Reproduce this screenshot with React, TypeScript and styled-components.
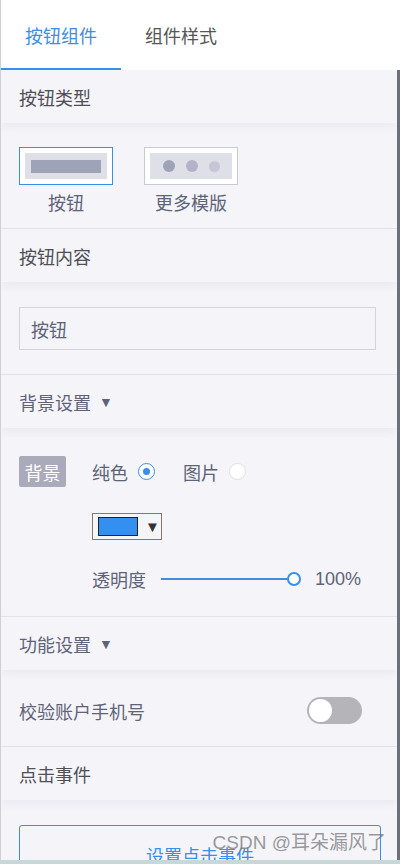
import React, { useState } from 'react'
import styled, { createGlobalStyle } from 'styled-components'

const GlobalStyle = createGlobalStyle`
  body {
    margin: 0;
    background: #f4f4f9;
    font-family: "Liberation Sans", "Noto Sans CJK SC", sans-serif;
  }
`

const BLUE = '#3a8ee6'
const LABEL = '#5f6378'

export default function App() {
    const [tab, setTab] = useState(0)
    const [template, setTemplate] = useState(0)
    const [fill, setFill] = useState<'color' | 'image'>('color')
    const [checkPhone, setCheckPhone] = useState(false)

    return (
        <>
            <GlobalStyle />
            <Frame>
                <Tabs>
                    {['按钮组件', '组件样式'].map((t, i) => (
                        <Tab key={t} $active={tab === i} onClick={() => setTab(i)}>{t}</Tab>
                    ))}
                </Tabs>
                <Body>
                    <Content>
                        <SectionHeader>按钮类型</SectionHeader>
                        <Section>
                            <Templates>
                                <TemplateItem onClick={() => setTemplate(0)}>
                                    <TemplateBox $selected={template === 0}>
                                        <Preview><Bar /></Preview>
                                    </TemplateBox>
                                    <Label>按钮</Label>
                                </TemplateItem>
                                <TemplateItem onClick={() => setTemplate(1)}>
                                    <TemplateBox $selected={template === 1}>
                                        <Preview>
                                            <Dot $tone="#9ea3b8" />
                                            <Dot $tone="#b1b4c8" />
                                            <Dot $tone="#c5c7d7" $small />
                                        </Preview>
                                    </TemplateBox>
                                    <Label>更多模版</Label>
                                </TemplateItem>
                            </Templates>
                        </Section>

                        <SectionHeader>按钮内容</SectionHeader>
                        <Section $pad="25px 21px 24px 18px">
                            <TextInput defaultValue="按钮" />
                        </Section>

                        <SectionHeader $tone={LABEL}>背景设置 <Caret>▼</Caret></SectionHeader>
                        <Section $pad="28px 18px 26px 18px">
                            <FillRow>
                                <Tag>背景</Tag>
                                <Option onClick={() => setFill('color')}>
                                    纯色 <Radio $checked={fill === 'color'} />
                                </Option>
                                <Option onClick={() => setFill('image')}>
                                    图片 <Radio $checked={fill === 'image'} />
                                </Option>
                            </FillRow>
                            <ColorPicker>
                                <Swatch />
                                <PickerArrow>▼</PickerArrow>
                            </ColorPicker>
                            <SliderRow>
                                <span>透明度</span>
                                <Track>
                                    <Knob />
                                </Track>
                                <Percent>100%</Percent>
                            </SliderRow>
                        </Section>

                        <SectionHeader $tone={LABEL}>功能设置 <Caret>▼</Caret></SectionHeader>
                        <Section $pad="27px 18px 22px 18px">
                            <ToggleRow>
                                <span>校验账户手机号</span>
                                <Toggle $on={checkPhone} onClick={() => setCheckPhone(!checkPhone)}>
                                    <Thumb $on={checkPhone} />
                                </Toggle>
                            </ToggleRow>
                        </Section>

                        <SectionHeader>点击事件</SectionHeader>
                        <Section $pad="25px 16px 0 18px" $last>
                            <EventButton>设置点击事件</EventButton>
                        </Section>
                        <Watermark>CSDN @耳朵漏风了</Watermark>
                    </Content>
                    <ScrollBar />
                </Body>
                <BottomStrip />
            </Frame>
        </>
    )
}

const Frame = styled.div`
  width: 400px;
  height: 864px;
  display: flex;
  flex-direction: column;
  overflow: hidden;
`

const Tabs = styled.div`
  height: 70px;
  flex-shrink: 0;
  display: flex;
  background: #fff;
  border-left: 1px solid #cfcfd6;
`

const Tab = styled.div<{ $active?: boolean }>`
  width: 120px;
  box-sizing: border-box;
  padding-top: 2px;
  display: flex;
  align-items: center;
  justify-content: center;
  font-size: 18px;
  color: ${p => (p.$active ? BLUE : '#555')};
  border-bottom: 2px solid ${p => (p.$active ? BLUE : 'transparent')};
  cursor: pointer;
`

const Body = styled.div`
  flex: 1;
  display: flex;
  min-height: 0;
`

const Content = styled.div`
  flex: 1;
  position: relative;
  background: #f4f4f9;
  border-left: 1px solid #cfcfd6;
  overflow: hidden;
`

const ScrollBar = styled.div`
  width: 3px;
  background: #6b7079;
`

const BottomStrip = styled.div`
  height: 4px;
  flex-shrink: 0;
  background: #c8d7d7;
`

const SectionHeader = styled.div<{ $tone?: string }>`
  position: relative;
  z-index: 1;
  height: 53px;
  display: flex;
  align-items: center;
  padding-left: 18px;
  font-size: 18px;
  color: ${p => p.$tone || '#4f4f55'};
  background: #f4f4f9;
  box-shadow: 0 4px 8px rgba(60, 60, 90, 0.06);
`

const Caret = styled.span`
  font-size: 14px;
  margin-left: 8px;
  margin-top: 1px;
  color: #5f6378;
`

const Section = styled.div<{ $pad?: string; $last?: boolean }>`
  padding: ${p => p.$pad || '24px 18px 11px 18px'};
  border-bottom: ${p => (p.$last ? 'none' : '1px solid #e3e3ea')};
`

const Templates = styled.div`
  display: flex;
  gap: 31px;
`

const TemplateItem = styled.div`
  display: flex;
  flex-direction: column;
  align-items: center;
  gap: 6px;
  cursor: pointer;
`

const TemplateBox = styled.div<{ $selected?: boolean }>`
  width: 94px;
  height: 38px;
  box-sizing: border-box;
  padding: 5px;
  background: #fff;
  border: 1px solid ${p => (p.$selected ? BLUE : '#c8c9d4')};
`

const Preview = styled.div`
  height: 100%;
  background: #dfdfe8;
  display: flex;
  align-items: center;
  justify-content: center;
  gap: 11px;
`

const Bar = styled.div`
  width: 70px;
  height: 13px;
  background: #9ea3b8;
`

const Dot = styled.div<{ $tone: string; $small?: boolean }>`
  width: ${p => (p.$small ? 11 : 12)}px;
  height: ${p => (p.$small ? 11 : 12)}px;
  border-radius: 50%;
  background: ${p => p.$tone};
`

const Label = styled.div`
  font-size: 18px;
  line-height: 26px;
  color: ${LABEL};
`

const TextInput = styled.input`
  display: block;
  width: 100%;
  height: 43px;
  box-sizing: border-box;
  padding: 0 11px;
  border: 1px solid #d3d3da;
  background: #f4f4f9;
  font: inherit;
  font-size: 18px;
  color: ${LABEL};
  outline: none;
`

const FillRow = styled.div`
  display: flex;
  align-items: center;
  height: 31px;
  font-size: 18px;
  color: ${LABEL};
`

const Tag = styled.div`
  width: 47px;
  height: 31px;
  border-radius: 2px;
  background: #aaaabb;
  color: #fff;
  display: flex;
  align-items: center;
  justify-content: center;
  margin-right: 26px;
`

const Option = styled.div`
  display: flex;
  align-items: center;
  gap: 10px;
  margin-right: 28px;
  cursor: pointer;
`

const Radio = styled.span<{ $checked?: boolean }>`
  width: 17px;
  height: 17px;
  box-sizing: border-box;
  border-radius: 50%;
  background: #fff;
  border: 1px solid ${p => (p.$checked ? BLUE : '#dcdfe6')};
  display: flex;
  align-items: center;
  justify-content: center;
  &::after {
    content: '';
    width: 7px;
    height: 7px;
    border-radius: 50%;
    background: ${BLUE};
    display: ${p => (p.$checked ? 'block' : 'none')};
  }
`

const ColorPicker = styled.div`
  margin: 26px 0 0 73px;
  width: 70px;
  height: 27px;
  box-sizing: border-box;
  border: 1px solid #8d7667;
  display: flex;
  align-items: center;
  padding-left: 5px;
  gap: 7px;
`

const Swatch = styled.div`
  width: 40px;
  height: 19px;
  box-sizing: border-box;
  background: #3390f0;
  border: 1px solid #222;
`

const PickerArrow = styled.span`
  font-size: 15px;
  color: #333;
`

const SliderRow = styled.div`
  margin: 28px 0 0 73px;
  height: 22px;
  display: flex;
  align-items: center;
  font-size: 18px;
  color: ${LABEL};
`

const Track = styled.div`
  position: relative;
  width: 133px;
  height: 2px;
  margin: 0 21px 0 15px;
  background: ${BLUE};
`

const Knob = styled.div`
  position: absolute;
  right: -7px;
  top: -6px;
  width: 14px;
  height: 14px;
  box-sizing: border-box;
  border-radius: 50%;
  background: #fff;
  border: 2px solid ${BLUE};
`

const Percent = styled.span`
  font-size: 18px;
`

const ToggleRow = styled.div`
  display: flex;
  align-items: center;
  justify-content: space-between;
  padding-right: 17px;
  height: 27px;
  font-size: 18px;
  color: ${LABEL};
`

const Toggle = styled.div<{ $on?: boolean }>`
  width: 55px;
  height: 27px;
  box-sizing: border-box;
  padding: 2px;
  border-radius: 14px;
  background: ${p => (p.$on ? BLUE : '#b5b4b9')};
  display: flex;
  justify-content: ${p => (p.$on ? 'flex-end' : 'flex-start')};
  cursor: pointer;
`

const Thumb = styled.div<{ $on?: boolean }>`
  width: 23px;
  height: 23px;
  border-radius: 50%;
  background: #fff;
`

const EventButton = styled.button`
  display: block;
  width: 100%;
  height: 52px;
  padding-top: 8px;
  box-sizing: border-box;
  border: 1px solid ${BLUE};
  border-radius: 3px;
  background: transparent;
  font: inherit;
  font-size: 18px;
  color: ${BLUE};
  cursor: pointer;
`

const Watermark = styled.div`
  position: absolute;
  right: 11px;
  bottom: 6px;
  font-size: 19px;
  color: rgba(110, 110, 115, 0.7);
  pointer-events: none;
`
